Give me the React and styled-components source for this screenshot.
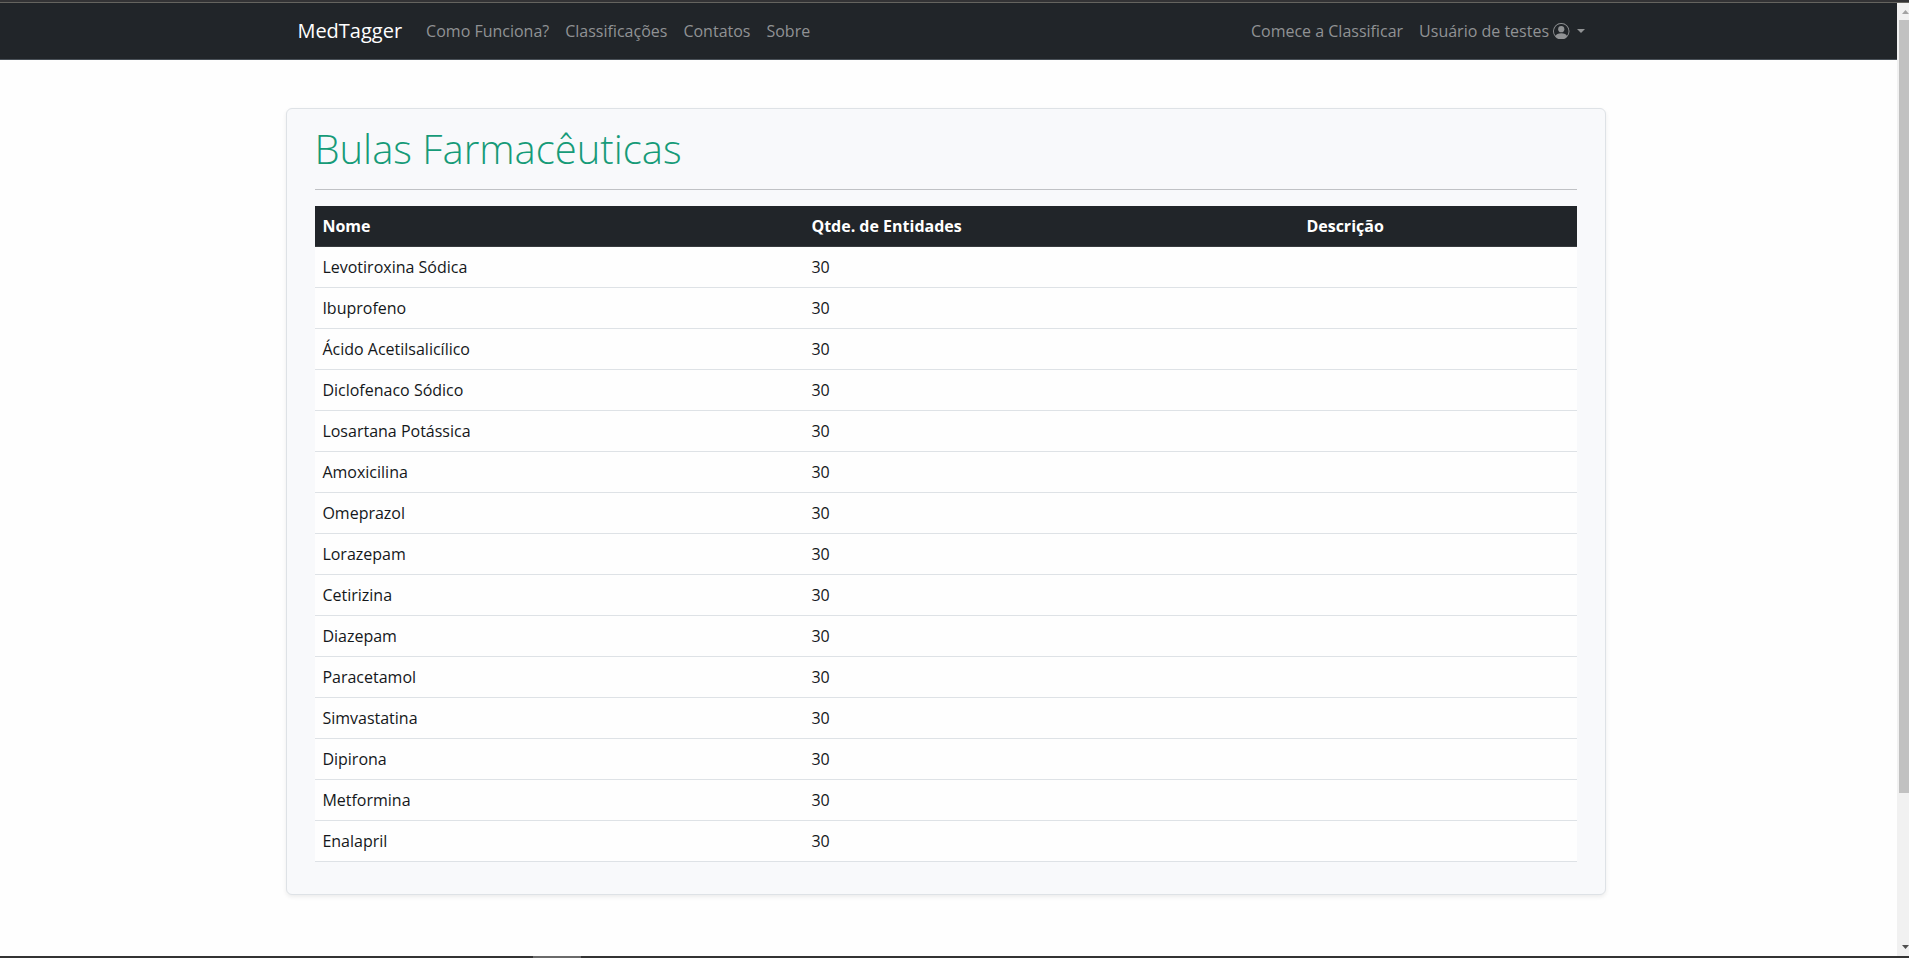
import React from "react";
import styled, { createGlobalStyle } from "styled-components";

const GlobalStyle = createGlobalStyle`
  *, *::before, *::after { box-sizing: border-box; }
  body {
    margin: 0;
    overflow: hidden;
    background: #fefefe;
    color: #14171a;
    font-family: "Open Sans", "Noto Sans", sans-serif;
    font-size: 16px;
    line-height: 24px;
  }
`;

const Frame = styled.div`
  display: flex;
  flex-direction: column;
  height: 100vh;
`;

const TopEdge = styled.div`
  flex: none;
  height: 3px;
  background: #333335;
  border-bottom: 1px solid #65645f;
`;

const BottomEdge = styled.div`
  flex: none;
  height: 2px;
  padding-left: 533px;
  background: #333333;
`;

const EdgeTab = styled.div`
  width: 48px;
  height: 2px;
  background: #6a6a6a;
`;

const Viewport = styled.div`
  flex: 1;
  display: flex;
  min-height: 0;
`;

const Page = styled.div`
  flex: 1;
  min-width: 0;
`;

const Navbar = styled.nav`
  display: flex;
  align-items: center;
  height: 57px;
  padding: 0 304px 1px 297.4px;
  background: #212529;
  border-bottom: 1px solid #495057;
`;

const Brand = styled.a`
  margin-right: 16px;
  font-size: 20px;
  line-height: 30px;
  color: #fff;
`;

const NavGroup = styled.div`
  display: flex;
  margin-left: ${(p) => (p.$end ? "auto" : "0")};
`;

const NavLink = styled.a`
  display: flex;
  align-items: center;
  padding: 8px;
  color: #909294;
  white-space: nowrap;
`;

const UserIcon = styled.svg`
  width: 16.5px;
  height: 16.5px;
  margin: 1px 0 0 4px;
`;

const Caret = styled.span`
  margin-left: 7.5px;
  border: 4px solid transparent;
  border-top-color: currentColor;
  border-bottom: 0;
`;

const Card = styled.main`
  width: 1320px;
  margin: 48px 0 0 286px;
  padding: 16px 28px 32px;
  background: #f8f9fb;
  border: 1px solid #dee2e6;
  border-radius: 6px;
  box-shadow: 0 2px 4px rgba(0, 0, 0, 0.075);
`;

const Title = styled.h1`
  margin: 0;
  padding-bottom: 16px;
  text-indent: -0.6px;
  font-size: 40px;
  font-weight: 300;
  line-height: 48px;
  color: #169b78;
  border-bottom: 1px solid #c0c2c5;
  box-sizing: content-box;
`;

const Table = styled.table`
  width: 100%;
  margin-top: 16px;
  table-layout: fixed;
  border-spacing: 0;
`;

const HeadCell = styled.th`
  width: ${(p) => p.$width};
  padding: 8px 8px 8px 7.4px;
  background: #212529;
  border-bottom: 1px solid #373b3e;
  color: #fff;
  font-weight: 700;
  text-align: left;
`;

const Cell = styled.td`
  padding: 8px 8px 8px 7.4px;
  background: #fefefe;
  border-bottom: 1px solid #dee2e6;
`;

const Scrollbar = styled.div`
  flex: none;
  display: flex;
  flex-direction: column;
  justify-content: space-between;
  width: 12px;
  padding-left: 2px;
  background: #f1f1f1;
`;

const ScrollArrow = styled.svg`
  flex: none;
  width: 10px;
  height: 17px;
  fill: ${(p) => p.$color};
`;

const Thumb = styled.div`
  height: 773px;
  margin-bottom: auto;
  background: #c1c1c1;
`;

const links = ["Como Funciona?", "Classificações", "Contatos", "Sobre"];

const medicines = [
  "Levotiroxina Sódica",
  "Ibuprofeno",
  "Ácido Acetilsalicílico",
  "Diclofenaco Sódico",
  "Losartana Potássica",
  "Amoxicilina",
  "Omeprazol",
  "Lorazepam",
  "Cetirizina",
  "Diazepam",
  "Paracetamol",
  "Simvastatina",
  "Dipirona",
  "Metformina",
  "Enalapril",
].map((name) => ({ name, entities: 30, description: "" }));

export default function App() {
  return (
    <>
      <GlobalStyle />
      <Frame>
        <TopEdge />
        <Viewport>
          <Page>
            <Navbar>
              <Brand>MedTagger</Brand>
              <NavGroup>
                {links.map((label) => (
                  <NavLink key={label}>{label}</NavLink>
                ))}
              </NavGroup>
              <NavGroup $end>
                <NavLink>Comece a Classificar</NavLink>
                <NavLink>
                  Usuário de testes
                  <UserIcon viewBox="0 0 16 16" fill="currentColor">
                    <path d="M11 6a3 3 0 1 1-6 0 3 3 0 0 1 6 0z" />
                    <path
                      fillRule="evenodd"
                      d="M0 8a8 8 0 1 1 16 0A8 8 0 0 1 0 8zm8-7a7 7 0 0 0-5.468 11.37C3.242 11.226 4.805 10 8 10s4.757 1.225 5.468 2.37A7 7 0 0 0 8 1z"
                    />
                  </UserIcon>
                  <Caret />
                </NavLink>
              </NavGroup>
            </Navbar>
            <Card>
              <Title>Bulas Farmacêuticas</Title>
              <Table>
                <thead>
                  <tr>
                    <HeadCell $width="489px">Nome</HeadCell>
                    <HeadCell $width="495px">Qtde. de Entidades</HeadCell>
                    <HeadCell $width="auto">Descrição</HeadCell>
                  </tr>
                </thead>
                <tbody>
                  {medicines.map((m) => (
                    <tr key={m.name}>
                      <Cell>{m.name}</Cell>
                      <Cell>{m.entities}</Cell>
                      <Cell>{m.description}</Cell>
                    </tr>
                  ))}
                </tbody>
              </Table>
            </Card>
          </Page>
          <Scrollbar>
            <ScrollArrow $color="#a3a3a3" viewBox="0 0 10 17">
              <path d="M3 11 6.5 7 10 11z" />
            </ScrollArrow>
            <Thumb />
            <ScrollArrow $color="#505050" viewBox="0 0 10 17">
              <path d="M3 6 6.5 10 10 6z" />
            </ScrollArrow>
          </Scrollbar>
        </Viewport>
        <BottomEdge>
          <EdgeTab />
        </BottomEdge>
      </Frame>
    </>
  );
}
